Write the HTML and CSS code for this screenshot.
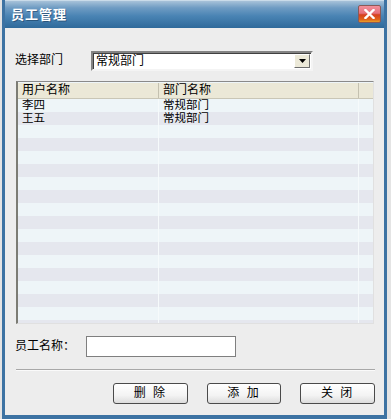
FILE: index.html
```html
<!DOCTYPE html>
<html lang="zh-CN">
<head>
    <meta charset="UTF-8">
    <title>员工管理</title>
    <link rel="stylesheet" href="styles.css">
</head>
<body>
    <div class="dialog">
        <div class="title-bar">
            <span class="title">员工管理</span>
            <button class="close-btn" aria-label="关闭">
                <svg width="11" height="10" viewBox="0 0 11 10">
                    <path d="M1.5 1 L9.5 9 M9.5 1 L1.5 9" stroke="#fff" stroke-width="2.4" stroke-linecap="square"/>
                </svg>
            </button>
        </div>
        <div class="content">
            <div class="dept-row">
                <span class="label">选择部门</span>
                <div class="select">
                    <span class="select-value">常规部门</span>
                    <span class="select-arrow">
                        <svg width="7" height="4" viewBox="0 0 7 4"><path d="M0 0 H7 L3.5 4 Z" fill="#000"/></svg>
                    </span>
                </div>
            </div>

            <div class="grid">
                <div class="grid-head">
                    <div class="cell col-user">用户名称</div>
                    <div class="cell col-dept">部门名称</div>
                    <div class="cell col-fill"></div>
                </div>
                <div class="grid-body">
                    <div class="row"><div class="cell col-user">李四</div><div class="cell col-dept">常规部门</div><div class="cell col-fill"></div></div>
                    <div class="row"><div class="cell col-user">王五</div><div class="cell col-dept">常规部门</div><div class="cell col-fill"></div></div>
                    <div class="row"><div class="cell col-user"></div><div class="cell col-dept"></div><div class="cell col-fill"></div></div>
                    <div class="row"><div class="cell col-user"></div><div class="cell col-dept"></div><div class="cell col-fill"></div></div>
                    <div class="row"><div class="cell col-user"></div><div class="cell col-dept"></div><div class="cell col-fill"></div></div>
                    <div class="row"><div class="cell col-user"></div><div class="cell col-dept"></div><div class="cell col-fill"></div></div>
                    <div class="row"><div class="cell col-user"></div><div class="cell col-dept"></div><div class="cell col-fill"></div></div>
                    <div class="row"><div class="cell col-user"></div><div class="cell col-dept"></div><div class="cell col-fill"></div></div>
                    <div class="row"><div class="cell col-user"></div><div class="cell col-dept"></div><div class="cell col-fill"></div></div>
                    <div class="row"><div class="cell col-user"></div><div class="cell col-dept"></div><div class="cell col-fill"></div></div>
                    <div class="row"><div class="cell col-user"></div><div class="cell col-dept"></div><div class="cell col-fill"></div></div>
                    <div class="row"><div class="cell col-user"></div><div class="cell col-dept"></div><div class="cell col-fill"></div></div>
                    <div class="row"><div class="cell col-user"></div><div class="cell col-dept"></div><div class="cell col-fill"></div></div>
                    <div class="row"><div class="cell col-user"></div><div class="cell col-dept"></div><div class="cell col-fill"></div></div>
                    <div class="row"><div class="cell col-user"></div><div class="cell col-dept"></div><div class="cell col-fill"></div></div>
                    <div class="row"><div class="cell col-user"></div><div class="cell col-dept"></div><div class="cell col-fill"></div></div>
                    <div class="row"><div class="cell col-user"></div><div class="cell col-dept"></div><div class="cell col-fill"></div></div>
                    <div class="row"><div class="cell col-user"></div><div class="cell col-dept"></div><div class="cell col-fill"></div></div>
                </div>
            </div>

            <div class="name-row">
                <span class="label">员工名称：</span>
                <div class="text-input"></div>
            </div>

            <div class="separator"></div>

            <div class="buttons">
                <button class="btn">删 除</button>
                <button class="btn">添 加</button>
                <button class="btn">关 闭</button>
            </div>
        </div>
    </div>
</body>
</html>
```

FILE: styles.css
```css
* {
    margin: 0;
    padding: 0;
    box-sizing: border-box;
}

body {
    width: 391px;
    height: 419px;
    overflow: hidden;
    background: #e4e4e4;
    font-family: "Liberation Sans", "Noto Sans CJK SC", sans-serif;
    font-size: 12px;
    color: #000;
    padding-left: 2px;
}

.dialog {
    width: 385px;
    height: 419px;
    border: 3px solid #3d73a3;
    border-top: none;
    border-bottom-width: 4px;
    background: #ededed;
    display: flex;
    flex-direction: column;
}

/* title bar */
.title-bar {
    height: 28px;
    display: flex;
    align-items: center;
    justify-content: space-between;
    padding: 0 3px 2px 6px;
    background: linear-gradient(180deg, #a7c2d9 0%, #6f9cc3 25%, #4a84b4 55%, #2f6a9b 100%);
    border-top: 1px solid #c9dbe9;
}

.title {
    color: #fff;
    font-weight: bold;
    font-size: 13px;
    letter-spacing: 1px;
    text-shadow: 1px 1px 0 rgba(20, 50, 80, 0.5);
}

.close-btn {
    width: 23px;
    height: 18px;
    border: 1px solid #8a5a58;
    border-radius: 2px;
    background: linear-gradient(180deg, #f2909a 0%, #e5707c 45%, #d6401e 55%, #e0661a 85%, #e6a22a 100%);
    display: flex;
    align-items: center;
    justify-content: center;
    margin-top: 1px;
}

/* body */
.content {
    flex: 1;
    padding: 23px 9px 0 10px;
    display: flex;
    flex-direction: column;
}

.label {
    line-height: 19px;
}

.dept-row {
    display: flex;
    align-items: center;
    height: 19px;
}

.dept-row .label {
    width: 76px;
}

.select {
    width: 222px;
    height: 20px;
    background: #fff;
    border: 2px solid;
    border-color: #838383 #f4f4f4 #f4f4f4 #838383;
    box-shadow: inset 1px 1px 0 #404040;
    display: flex;
    align-items: center;
    justify-content: space-between;
    padding: 0 1px 0 3px;
}

.select-value {
    line-height: 14px;
}

.select-arrow {
    width: 16px;
    height: 14px;
    background: #ece9d8;
    border: 1px solid;
    border-color: #fff #6e6e6e #6e6e6e #fff;
    display: flex;
    align-items: center;
    justify-content: center;
}

/* grid */
.grid {
    margin: 11px 0 0 1px;
    width: 358px;
    height: 243px;
    border: 1px solid #e0e0e0;
    border-top-color: #8a8a8a;
    border-left: 2px solid #7c7c74;
    background: #eef5f8;
    overflow: hidden;
}

.grid-head {
    display: flex;
    height: 16px;
    margin-top: 1px;
    background: #ebe8d7;
    border-bottom: 1px solid #c9c6b6;
}

.grid-head .cell {
    line-height: 15px;
    border-right: 1px solid #c4c1b0;
}

.grid-head .col-fill {
    border-right: none;
}

.cell {
    padding-left: 4px;
    white-space: nowrap;
}

.col-user {
    width: 141px;
}

.col-dept {
    width: 200px;
}

.col-fill {
    flex: 1;
}

.row {
    display: flex;
    height: 13px;
    background: #eef5f8;
}

.row:nth-child(even) {
    background: #e5e7ee;
}

.row .cell {
    line-height: 13px;
    font-size: 11.5px;
    border-right: 1px solid #f6fafb;
}

.row .col-fill {
    border-right: none;
}

/* name input */
.name-row {
    display: flex;
    align-items: center;
    margin-top: 12px;
    height: 21px;
}

.name-row .label {
    width: 71px;
}

.text-input {
    width: 150px;
    height: 21px;
    background: #fff;
    border: 1px solid #7f7f7f;
}

.separator {
    margin: 12px 0 0 1px;
    width: 359px;
    height: 2px;
    border-top: 1px solid #a8a8a8;
    border-bottom: 1px solid #fafafa;
}

/* buttons */
.buttons {
    display: flex;
    gap: 19px;
    margin-top: 12px;
    padding-left: 98px;
}

.btn {
    width: 75px;
    height: 21px;
    border: 1px solid #4a4a4a;
    border-radius: 3px;
    background: linear-gradient(180deg, #ffffff 0%, #f3f3f3 60%, #dcdcdc 100%);
    font-family: inherit;
    font-size: 12px;
    letter-spacing: 2px;
    line-height: 19px;
    color: #000;
}
```
